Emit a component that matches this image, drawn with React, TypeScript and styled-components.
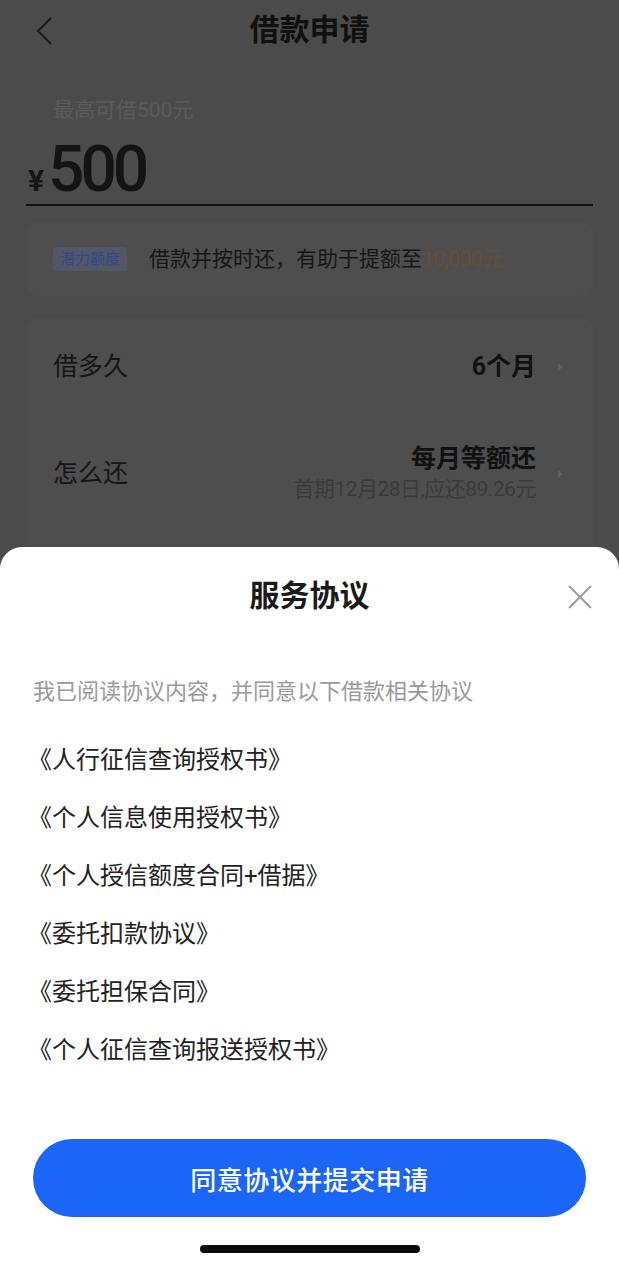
import React from "react";
import styled, { createGlobalStyle } from "styled-components";

const GlobalStyle = createGlobalStyle`
  html, body {
    margin: 0;
    padding: 0;
    background: #4b4b4c;
  }
  body {
    font-family: Roboto, "Noto Sans CJK SC", sans-serif;
    -webkit-font-smoothing: antialiased;
  }
`;

const Screen = styled.div`
  position: relative;
  width: 619px;
  height: 1263px;
  overflow: hidden;
  background: #4b4b4c;
`;

const Page = styled.div`
  display: flex;
  flex-direction: column;
  padding: 0 26px;
`;

const NavBar = styled.div`
  position: relative;
  height: 60px;
  display: flex;
  align-items: center;
  justify-content: center;
`;

const BackButton = styled.div`
  position: absolute;
  left: 8px;
  top: 16px;
  width: 22px;
  height: 30px;
`;

const NavTitle = styled.div`
  font-size: 30px;
  font-weight: 700;
  line-height: 36px;
  color: #101010;
`;

const AmountBlock = styled.div`
  display: flex;
  flex-direction: column;
  padding-top: 38px;
`;

const AmountLabel = styled.div`
  padding-left: 27px;
  font-size: 21px;
  line-height: 24px;
  color: #5b5b5c;
`;

const AmountRow = styled.div`
  display: flex;
  align-items: baseline;
  margin-top: 14px;
  padding-left: 2px;
  height: 68px;
  border-bottom: 2px solid #111;
`;

const Currency = styled.span`
  font-size: 30px;
  font-weight: 700;
  line-height: 68px;
  color: #151515;
  margin-right: 4px;
`;

const AmountValue = styled.span`
  font-size: 64px;
  font-weight: 500;
  line-height: 68px;
  letter-spacing: -4px;
  color: #141414;
`;

const TipCard = styled.div`
  margin-top: 16px;
  height: 74px;
  border-radius: 12px;
  background: #4e4e4f;
  display: flex;
  align-items: center;
  padding: 0 27px;
  gap: 22px;
`;

const Badge = styled.span`
  display: inline-flex;
  align-items: center;
  height: 24px;
  padding: 0 7px;
  border-radius: 4px;
  background: #525766;
  color: #33468f;
  font-size: 15px;
  line-height: 24px;
`;

const TipText = styled.span`
  font-size: 21px;
  line-height: 28px;
  color: #161616;
  white-space: nowrap;
`;

const Highlight = styled.span`
  color: #6a4d33;
  letter-spacing: -0.5px;
`;

const OptionCard = styled.div`
  margin-top: 22px;
  border-radius: 12px;
  background: #4e4e4f;
  padding: 0 27px;
  height: 320px;
`;

const OptionRow = styled.div<{ $height: number }>`
  height: ${(p) => p.$height}px;
  display: flex;
  align-items: center;
  justify-content: space-between;
`;

const OptionLabel = styled.div`
  font-size: 25px;
  line-height: 30px;
  color: #151515;
`;

const OptionValue = styled.div`
  display: flex;
  align-items: center;
  gap: 22px;
  margin-right: 3px;
`;

const ValueStack = styled.div`
  display: flex;
  flex-direction: column;
  align-items: flex-end;
`;

const ValueMain = styled.div`
  font-size: 25px;
  font-weight: 700;
  line-height: 30px;
  color: #111;
`;

const ValueSub = styled.div`
  font-size: 21px;
  line-height: 30px;
  color: #3a3a3b;
  letter-spacing: -0.5px;
`;

const Caret = styled.span`
  width: 0;
  height: 0;
  border-top: 4px solid transparent;
  border-bottom: 4px solid transparent;
  border-left: 5px solid #606062;
`;

const Sheet = styled.div`
  position: absolute;
  left: 0;
  right: 0;
  top: 547px;
  bottom: 0;
  background: #fff;
  border-radius: 22px 22px 0 0;
  display: flex;
  flex-direction: column;
  padding: 0 33px;
`;

const SheetHeader = styled.div`
  position: relative;
  height: 98px;
  display: flex;
  align-items: center;
  justify-content: center;
`;

const SheetTitle = styled.div`
  font-size: 30px;
  font-weight: 700;
  line-height: 36px;
  color: #1a1a1a;
`;

const CloseButton = styled.div`
  position: absolute;
  right: -7px;
  top: 37px;
  width: 26px;
  height: 26px;
`;

const Intro = styled.div`
  margin-top: 32px;
  font-size: 22px;
  line-height: 30px;
  color: #9a9a9a;
`;

const AgreementList = styled.div`
  margin-top: 21px;
  display: flex;
  flex-direction: column;
`;

const AgreementItem = styled.div`
  height: 58px;
  display: flex;
  align-items: center;
  margin-left: -5px;
  font-size: 24px;
  color: #222;
`;

const Footer = styled.div`
  margin-top: auto;
  display: flex;
  flex-direction: column;
  align-items: center;
  padding-bottom: 10px;
`;

const SubmitButton = styled.button`
  width: 553px;
  height: 78px;
  border: none;
  border-radius: 39px;
  background: #1b66f6;
  color: #fff;
  font-family: inherit;
  font-size: 26px;
  font-weight: 500;
  letter-spacing: 0.5px;
`;

const HomeIndicator = styled.div`
  margin-top: 28px;
  width: 220px;
  height: 8px;
  border-radius: 4px;
  background: #0a0a0a;
`;

const agreements = [
  "《人行征信查询授权书》",
  "《个人信息使用授权书》",
  "《个人授信额度合同+借据》",
  "《委托扣款协议》",
  "《委托担保合同》",
  "《个人征信查询报送授权书》",
];

export default function App() {
  return (
    <>
      <GlobalStyle />
      <Screen>
        <Page>
          <NavBar>
            <BackButton>
              <svg width="22" height="30" viewBox="0 0 22 30">
                <path d="M17 2 L4 15 L17 28" fill="none" stroke="#1c1c1c" strokeWidth="2.2" />
              </svg>
            </BackButton>
            <NavTitle>借款申请</NavTitle>
          </NavBar>

          <AmountBlock>
            <AmountLabel>最高可借500元</AmountLabel>
            <AmountRow>
              <Currency>¥</Currency>
              <AmountValue>500</AmountValue>
            </AmountRow>
          </AmountBlock>

          <TipCard>
            <Badge>潜力额度</Badge>
            <TipText>
              借款并按时还，有助于提额至<Highlight>10,000元</Highlight>
            </TipText>
          </TipCard>

          <OptionCard>
            <OptionRow $height={98}>
              <OptionLabel>借多久</OptionLabel>
              <OptionValue>
                <ValueMain>6个月</ValueMain>
                <Caret />
              </OptionValue>
            </OptionRow>
            <OptionRow $height={116}>
              <OptionLabel>怎么还</OptionLabel>
              <OptionValue>
                <ValueStack>
                  <ValueMain>每月等额还</ValueMain>
                  <ValueSub>首期12月28日,应还89.26元</ValueSub>
                </ValueStack>
                <Caret />
              </OptionValue>
            </OptionRow>
          </OptionCard>
        </Page>

        <Sheet>
          <SheetHeader>
            <SheetTitle>服务协议</SheetTitle>
            <CloseButton>
              <svg width="26" height="26" viewBox="0 0 26 26">
                <path d="M2 2 L24 24 M24 2 L2 24" stroke="#a0a0a0" strokeWidth="2" />
              </svg>
            </CloseButton>
          </SheetHeader>
          <Intro>我已阅读协议内容，并同意以下借款相关协议</Intro>
          <AgreementList>
            {agreements.map((a) => (
              <AgreementItem key={a}>{a}</AgreementItem>
            ))}
          </AgreementList>
          <Footer>
            <SubmitButton>同意协议并提交申请</SubmitButton>
            <HomeIndicator />
          </Footer>
        </Sheet>
      </Screen>
    </>
  );
}
